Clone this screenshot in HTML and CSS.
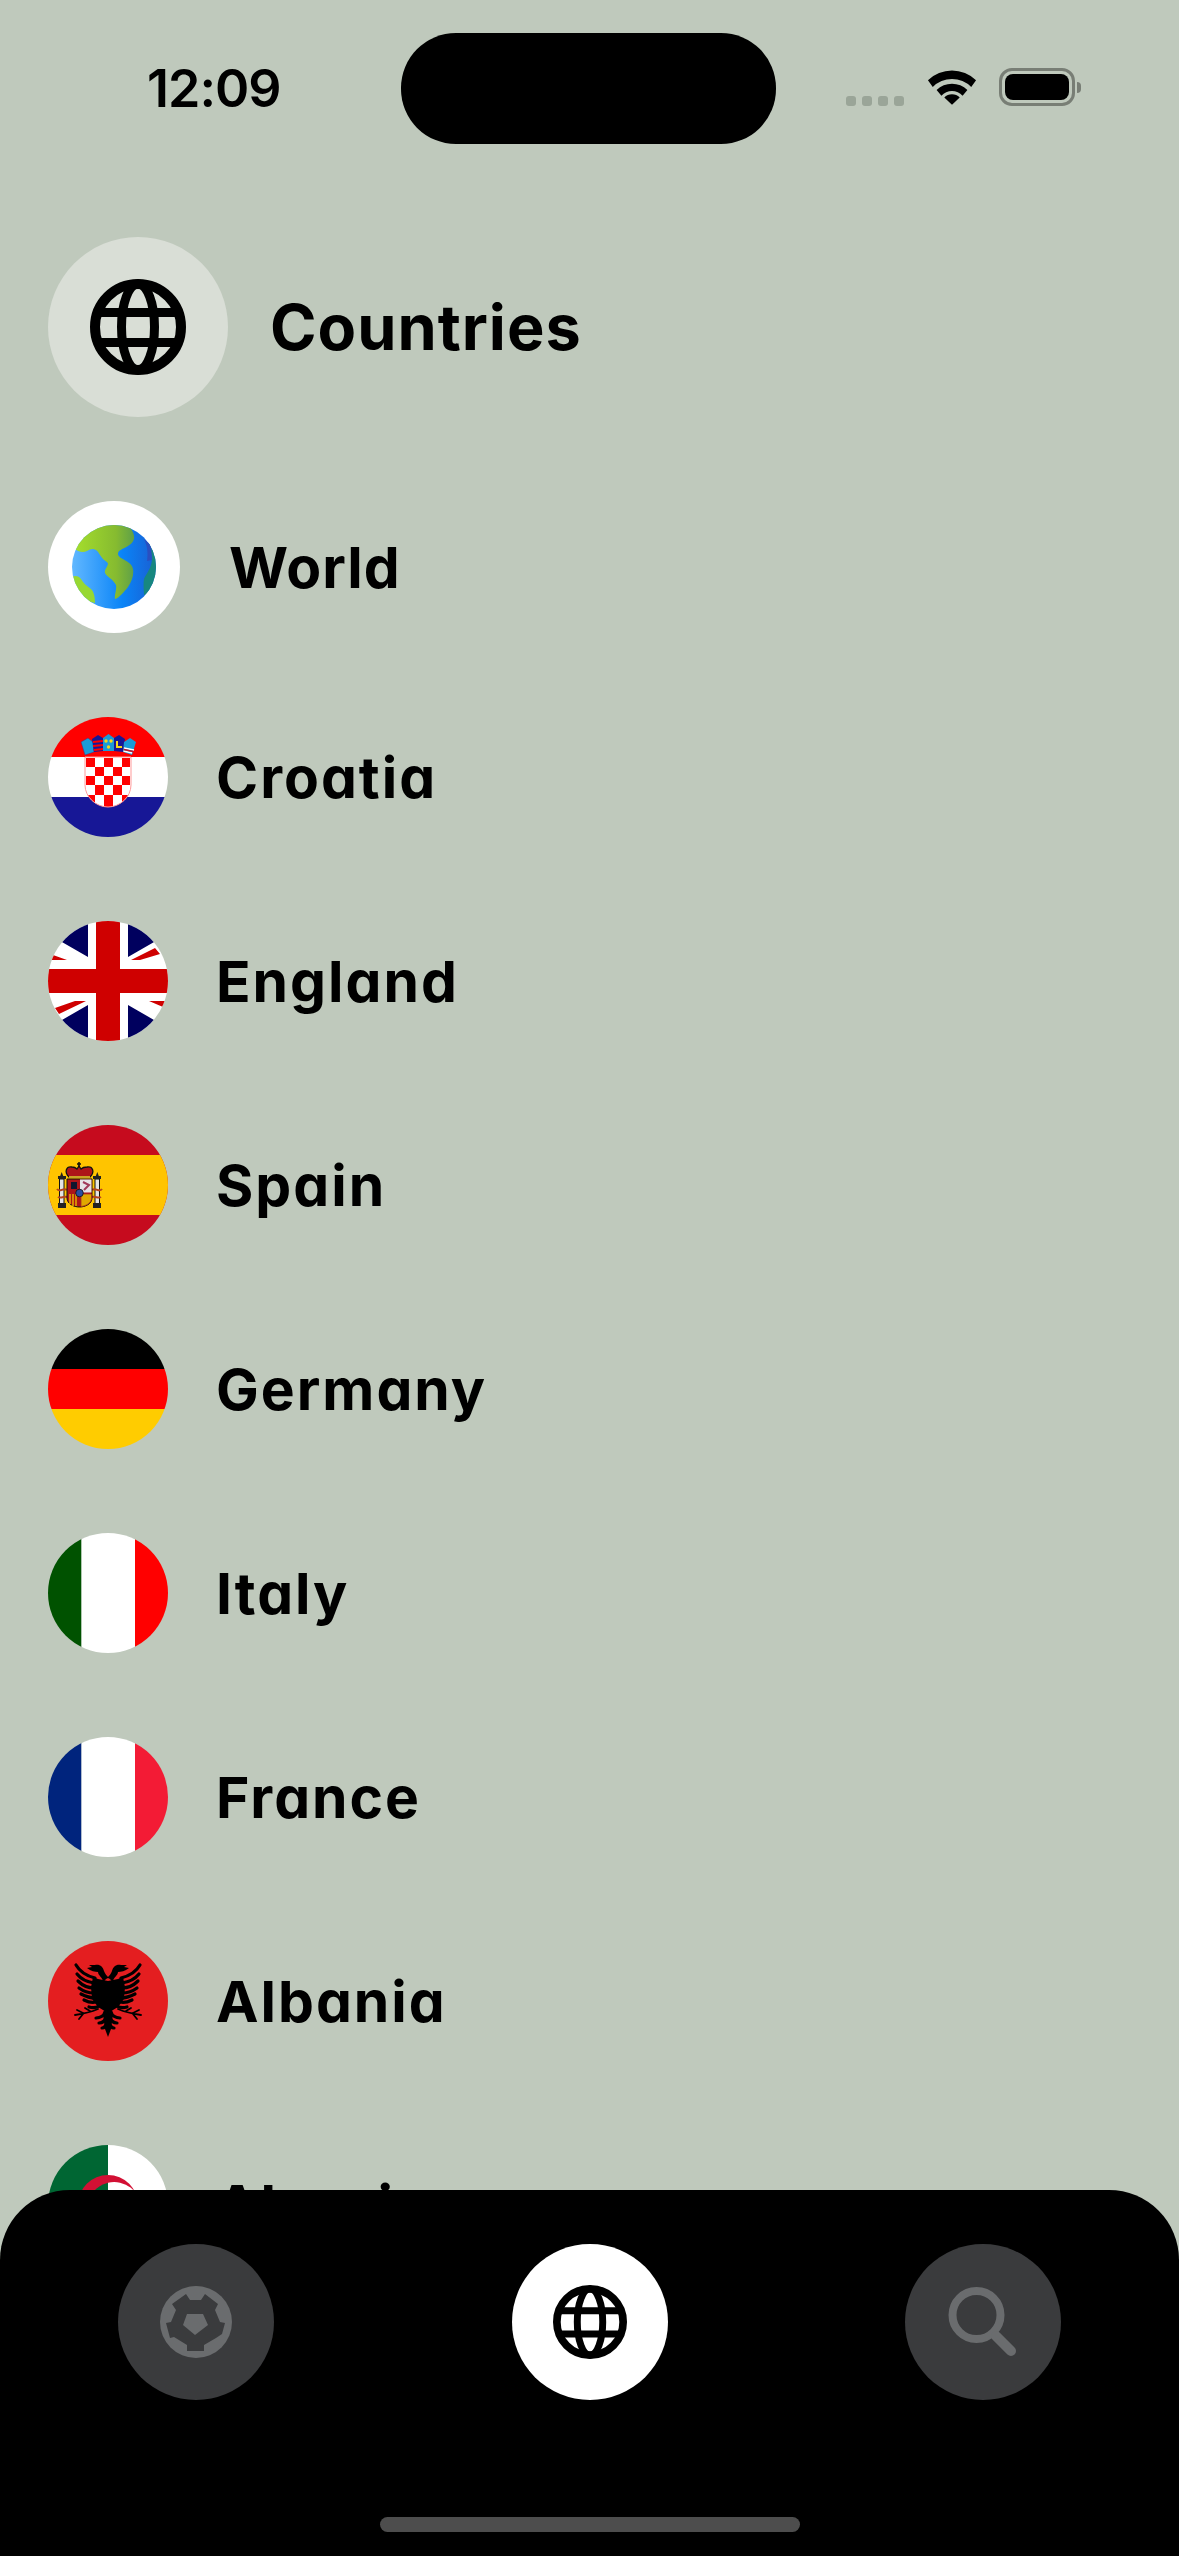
FILE: index.html
```html
<!DOCTYPE html>
<html lang="en">
<head>
    <meta charset="UTF-8">
    <meta name="viewport" content="width=device-width, initial-scale=1.0">
    <title>Countries</title>
    <link rel="stylesheet" href="styles.css">
</head>
<body>
    <svg class="defs" width="0" height="0">
        <defs>
            <symbol id="globe" viewBox="0 0 96 96">
                <g fill="none" stroke="currentColor" stroke-width="9">
                    <circle cx="48" cy="48" r="43" stroke-width="10"/>
                    <ellipse cx="48" cy="48" rx="16.500" ry="43"/>
                    <path d="M8 33.500H88M8 63.500H88"/>
                </g>
            </symbol>
            <clipPath id="shield"><path d="M37 40H83V68C83 80 72 90 60 90 48 90 37 80 37 68Z"/></clipPath>
            <g id="eagle-half">
                <path d="M60 37C57 38 56 41 55 41 55 36 50 35 50 31 47 31 43 30 39 27L44 26 41 24 47 24C52 23 55 26 56 30 57 33 59 35 60 36Z" fill="#000"/>
                <path d="M60 40L50 38 45 36 43 46 44 58 50 66 60 72Z" fill="#000"/>
                <g fill="none" stroke="#000" stroke-width="3.200" stroke-linecap="round">
                    <path d="M47 37C39 35 32 31 28 24"/>
                    <path d="M46 42C39 41 33 38 29 33"/>
                    <path d="M46 47C39 47 34 44 30 40"/>
                    <path d="M46 52C40 52 35 50 31 47"/>
                    <path d="M47 57C41 57 37 55 33 53"/>
                    <path d="M48 61C44 62 40 61 36 59"/>
                    <path d="M51 65C48 67 45 67 41 66"/>
                    <path d="M57 71C56 75 52 77 48 77"/>
                    <path d="M58 76C57 80 55 82 51 82"/>
                    <path d="M59 81C58 85 57 87 54 87"/>
                </g>
                <path d="M60 70L55 73 57 88 60 96Z" fill="#000"/>
                <path d="M50 68C43 71 34 73 27 74M35 72L29 69M35 73L31 78M42 70L37 67" fill="none" stroke="#000" stroke-width="1.800" stroke-linecap="round"/>
            </g>
        </defs>
    </svg>

    <div class="screen">
        <div class="status-bar">
            <span class="time">12:09</span>
            <div class="island"></div>
            <div class="status-icons">
                <div class="signal"><i></i><i></i><i></i><i></i></div>
                <svg class="wifi" width="50" height="38" viewBox="0 0 52 38">
                    <path d="M1 12 A36 36 0 0 1 51 12 L46 19 A28 28 0 0 0 6 19Z"/>
                    <path d="M10 23 A23 23 0 0 1 42 23 L37 29 A15 15 0 0 0 15 29Z" transform="translate(0 -1)"/>
                    <path d="M18 30 A11 11 0 0 1 34 30 L26 37.500Z"/>
                </svg>
                <div class="battery"><div class="battery-level"></div></div>
                <div class="battery-cap"></div>
            </div>
        </div>

        <div class="header">
            <div class="header-icon"><svg width="96" height="96"><use href="#globe"/></svg></div>
            <h1>Countries</h1>
        </div>

        <div class="world-row">
            <div class="world-icon">
                <svg width="84" height="84" viewBox="0 0 84 84">
                    <defs>
                        <linearGradient id="sea" x1="0" x2="1" y1="0" y2="0">
                            <stop offset="0" stop-color="#62b8ff"/>
                            <stop offset=".6" stop-color="#0a84f7"/>
                            <stop offset="1" stop-color="#1a5fd2"/>
                        </linearGradient>
                        <linearGradient id="land" x1="0" x2="1" y1="0" y2="0">
                            <stop offset="0" stop-color="#a5de2c"/>
                            <stop offset=".7" stop-color="#86bb30"/>
                            <stop offset="1" stop-color="#5fa048"/>
                        </linearGradient>
                        <clipPath id="earth"><circle cx="42" cy="42" r="42"/></clipPath>
                    </defs>
                    <g clip-path="url(#earth)">
                        <rect width="84" height="84" fill="url(#sea)"/>
                        <path d="M2 23C6 27 11 28 15 26 18 24 21 23 24 25 27 27 28 31 31 34 33 36 36 37 36 39 35 43 32 45 33 48 35 52 41 54 44 60 45 65 42 70 43 74 47 73 52 67 56 62 60 56 62 50 61 44 60 38 54 36 49 33 46 31 45 29 47 26 51 23 60 21 62 14 63 8 58 2 54-2L10-2Z" fill="url(#land)"/>
                        <path d="M0 52C3 50 7 51 9 54 11 58 15 61 19 64 22 67 23 72 23 78L0 72Z" fill="#97d832"/>
                        <path d="M76 14C77 22 80 28 80 35 79 44 74 49 72 54 71 60 72 66 72 70L86 66V14Z" fill="#17877f"/>
                        <path d="M72 14C76 22 76 30 75 36L80 35 79 20Z" fill="#2a4fc0"/>
                    </g>
                </svg>
            </div>
            <span class="country-name">World</span>
        </div>

        <ul class="country-list">
            <li class="country">
                <svg class="flag" viewBox="0 0 120 120">
                    <rect width="120" height="40" fill="#ff0000"/>
                    <rect y="40" width="120" height="40" fill="#fff"/>
                    <rect y="80" width="120" height="40" fill="#171796"/>
                    <!-- crown -->
                    <path d="M33 25L40 21 45 25 46 35 37 38Z" fill="#1a9bd8" stroke="#5a2a6a" stroke-width=".5"/>
                    <path d="M44 22L50 18 55 21V34L46 35Z" fill="#171796"/>
                    <path d="M45 25L55 24M45 29L55 28M46 33L55 32" stroke="#f00" stroke-width="2"/>
                    <path d="M55 21L60.500 17 66 21V34H55Z" fill="#1a9bd8"/>
                    <circle cx="58" cy="24" r="1.700" fill="#f7db17"/><circle cx="63" cy="24" r="1.700" fill="#f7db17"/><circle cx="60.500" cy="30" r="1.700" fill="#f7db17"/>
                    <path d="M66 21L71 18 77 22 75 35 66 34Z" fill="#171796"/>
                    <path d="M69 24V30H74" fill="none" stroke="#f7db17" stroke-width="2"/>
                    <path d="M76 25L82 21 88 25 84 38 75 35Z" fill="#1a9bd8"/>
                    <path d="M76 31L86 33M75.500 34L84 36" stroke="#fff" stroke-width="1.600"/>
                    <path d="M76 32.500L85 34.500" stroke="#d01020" stroke-width="1.400"/>
                    <!-- shield -->
                    <g clip-path="url(#shield)">
                        <rect x="37" y="40" width="46" height="50" fill="#fff"/>
                        <path d="M38 41h9v9h-9zM56 41h9v9h-9zM74 41h8v9h-8zM47 50h9v9h-9zM65 50h9v9h-9zM38 59h9v9h-9zM56 59h9v9h-9zM74 59h8v9h-8zM47 68h9v10h-9zM65 68h9v10h-9zM38 78h9v12h-9zM56 78h9v12h-9zM74 78h8v12h-8z" fill="#ff0000"/>
                    </g>
                    <path d="M37 40H83V68C83 80 72 90 60 90 48 90 37 80 37 68Z" fill="none" stroke="#ff9a9a" stroke-width="1"/>
                </svg>
                <span class="country-name">Croatia</span>
            </li>
            <li class="country">
                <svg class="flag" viewBox="0 0 120 120">
                    <rect width="120" height="120" fill="#fff"/>
                    <path d="M40 0V36L0 13V0ZM80 0V36L120 13V0ZM40 120V84L0 107V120ZM80 120V84L120 107V120Z" fill="#00005e"/>
                    <path d="M0 39V33L5 34 19 39ZM83 39L107 27 112 33 92 39ZM7 87L27 80H38L11 93ZM101 80H120V86H115Z" fill="#cf0000"/>
                    <rect x="48" width="24" height="120" fill="#cf0000"/>
                    <rect y="48" width="120" height="24" fill="#cf0000"/>
                </svg>
                <span class="country-name">England</span>
            </li>
            <li class="country">
                <svg class="flag" viewBox="0 0 120 120">
                    <rect width="120" height="120" fill="#c60b1e"/>
                    <rect y="30" width="120" height="60" fill="#ffc400"/>
                    <!-- pillars -->
                    <rect x="11.500" y="54" width="4.500" height="25" fill="#e4e4e4" stroke="#111" stroke-width="1"/>
                    <rect x="47" y="54" width="4.500" height="25" fill="#e4e4e4" stroke="#111" stroke-width="1"/>
                    <path d="M10 78h8v5h-8zM45 78h8v5h-8zM10 51h8v3h-8zM45 51h8v3h-8z" fill="#222"/>
                    <path d="M13.700 47l1.500 4h-3zM49.300 47l1.500 4h-3z" fill="#222"/>
                    <path d="M9 64C12 68 15 62 19 65M44 65C48 62 51 68 54 64M10 72C13 74 15 71 19 72M44 72C48 71 50 74 53 72" stroke="#b5421e" stroke-width="2" fill="none"/>
                    <!-- crown -->
                    <path d="M21 52C16 47 18 41 24 42 26 42 28 43 29 44L31 41 33 44C35 42 37 42 39 42 45 41 47 47 42 52Z" fill="#ad1519" stroke="#111" stroke-width="1.300"/>
                    <path d="M31 37V42M29 39H33" stroke="#111" stroke-width="1.500"/>
                    <path d="M21 52H42" stroke="#c9a227" stroke-width="2"/>
                    <!-- shield -->
                    <path d="M19 54H44V73C44 79 37 82 31.500 82 26 82 19 79 19 73Z" fill="#ad1519" stroke="#111" stroke-width="1"/>
                    <rect x="32" y="54.500" width="11.500" height="13" fill="#e6e2e6"/>
                    <path d="M35 57L41 60 36 65" stroke="#a13a5a" stroke-width="2" fill="none"/>
                    <path d="M23 57h6v7h-6z" fill="#10162e"/>
                    <path d="M22 69V79M25 69V81M28 69V81" stroke="#e0a800" stroke-width="1.600"/>
                    <path d="M33 69H43.500V73C43.500 78 38 81 33 81.500Z" fill="#e0a800" stroke="#a8321c" stroke-width=".8"/>
                    <circle cx="31.500" cy="68" r="3.800" fill="#2a4ea0" stroke="#111" stroke-width=".8"/>
                </svg>
                <span class="country-name">Spain</span>
            </li>
            <li class="country">
                <svg class="flag" viewBox="0 0 120 120">
                    <rect width="120" height="40" fill="#000"/>
                    <rect y="40" width="120" height="40" fill="#ff0000"/>
                    <rect y="80" width="120" height="40" fill="#ffcc00"/>
                </svg>
                <span class="country-name">Germany</span>
            </li>
            <li class="country">
                <svg class="flag" viewBox="0 0 120 120">
                    <rect width="33.500" height="120" fill="#005200"/>
                    <rect x="33.500" width="53.500" height="120" fill="#fff"/>
                    <rect x="87" width="33" height="120" fill="#ff0000"/>
                </svg>
                <span class="country-name">Italy</span>
            </li>
            <li class="country">
                <svg class="flag" viewBox="0 0 120 120">
                    <rect width="33.500" height="120" fill="#00247d"/>
                    <rect x="33.500" width="53.500" height="120" fill="#fff"/>
                    <rect x="87" width="33" height="120" fill="#f31b35"/>
                </svg>
                <span class="country-name">France</span>
            </li>
            <li class="country">
                <svg class="flag" viewBox="0 0 120 120">
                    <rect width="120" height="120" fill="#e41e20"/>
                    <use href="#eagle-half"/>
                    <use href="#eagle-half" transform="matrix(-1 0 0 1 120 0)"/>
                </svg>
                <span class="country-name">Albania</span>
            </li>
            <li class="country">
                <svg class="flag" viewBox="0 0 120 120">
                    <rect width="60" height="120" fill="#006633"/>
                    <rect x="60" width="60" height="120" fill="#fff"/>
                    <circle cx="60" cy="60" r="30" fill="#d21034"/>
                    <path d="M60 37.700A27 27 0 0 0 60 90.300Z" fill="#006633"/>
                    <path d="M60 37.700A27 27 0 1 1 60 90.300Z" fill="#fff"/>
                </svg>
                <span class="country-name">Algeria</span>
            </li>
        </ul>
    </div>

    <nav class="tab-bar">
        <div class="tabs">
            <a class="tab">
                <svg width="72" height="72" viewBox="0 0 72 72">
                    <circle cx="36" cy="36" r="36" fill="#6a6c6e"/>
                    <path d="M26 8L30 14H41L45 8 58 18 55 24 60 36 65 37 62 48 56 52 44 59V65H27V59L14 51 10 52 6 37 11 36 16 24 12 18Z" fill="#3a3b3d"/>
                    <path d="M27 28H43L48 39 35 49 23 39Z" fill="#6a6c6e"/>
                </svg>
            </a>
            <a class="tab tab-active"><svg width="74" height="74"><use href="#globe"/></svg></a>
            <a class="tab">
                <svg width="72" height="72" viewBox="0 0 72 72" fill="none" stroke="#6a6c6e">
                    <circle cx="29.500" cy="29" r="24" stroke-width="8"/>
                    <path d="M49 50L64 65" stroke-width="10" stroke-linecap="round"/>
                </svg>
            </a>
        </div>
        <div class="home-indicator"></div>
    </nav>
</body>
</html>
```

FILE: styles.css
```css
* {
    box-sizing: border-box;
}
html, body {
    margin: 0;
    padding: 0;
}
body {
    width: 1179px;
    height: 2556px;
    position: relative;
    overflow: hidden;
    background-color: #bfc9bc;
    color: #000;
    font-family: 'Inter', 'Liberation Sans', sans-serif;
    font-feature-settings: 'cv11', 'liga' 0;
}
.defs {
    position: absolute;
}
.screen {
    height: 2556px;
    overflow: hidden;
}

/* status bar */
.status-bar {
    height: 237px;
    padding-top: 33px;
    display: flex;
    align-items: flex-start;
}
.time {
    width: 401px;
    padding: 31px 0 0 147px;
    font-size: 52px;
    line-height: 50px;
    font-weight: 600;
    letter-spacing: -1px;
}
.island {
    width: 375px;
    height: 111px;
    border-radius: 55px;
    background: #000;
}
.status-icons {
    display: flex;
    align-items: flex-end;
    margin-left: 70px;
    padding-top: 35px;
}
.signal {
    display: flex;
    gap: 6px;
    margin-right: 23px;
}
.signal i {
    width: 10px;
    height: 10px;
    border-radius: 3px;
    background: #9aa598;
}
.wifi {
    display: block;
    fill: #000;
    margin-right: 22px;
}
.battery {
    width: 76px;
    height: 38px;
    padding: 3px;
    border: 3px solid #787e75;
    border-radius: 13px;
}
.battery-level {
    height: 100%;
    border-radius: 8px;
    background: #000;
}
.battery-cap {
    width: 4px;
    height: 11px;
    margin: 0 0 13px 2px;
    border-radius: 0 4px 4px 0;
    background: #787e75;
}

/* header */
.header {
    display: flex;
    align-items: center;
    gap: 42px;
    padding-left: 48px;
}
.header-icon {
    width: 180px;
    height: 180px;
    border-radius: 50%;
    background: #d9ded6;
    display: flex;
    align-items: center;
    justify-content: center;
}
h1 {
    margin: 0;
    font-size: 63px;
    font-weight: 700;
    letter-spacing: 1px;
}

/* rows */
.world-row {
    display: flex;
    align-items: center;
    gap: 49px;
    margin-top: 84px;
    padding-left: 48px;
}
.world-icon {
    width: 132px;
    height: 132px;
    border-radius: 50%;
    background: #fff;
    display: flex;
    align-items: center;
    justify-content: center;
}
.country-list {
    list-style: none;
    margin: 84px 0 0;
    padding: 0 0 0 48px;
    display: flex;
    flex-direction: column;
    gap: 84px;
}
.country {
    display: flex;
    align-items: center;
    gap: 48px;
}
.flag {
    width: 120px;
    height: 120px;
    border-radius: 50%;
    flex-shrink: 0;
}
.country-name {
    font-size: 57px;
    font-weight: 700;
    letter-spacing: 2px;
}
.world-row .country-name {
    letter-spacing: 1px;
}

/* bottom bar */
.tab-bar {
    position: absolute;
    left: 0;
    right: 0;
    bottom: 0;
    height: 366px;
    padding-top: 54px;
    background: #000;
    border-radius: 70px 70px 0 0;
    display: flex;
    flex-direction: column;
    align-items: center;
}
.tabs {
    display: flex;
    gap: 237.5px;
}
.tab {
    width: 156px;
    height: 156px;
    border-radius: 50%;
    background: #3a3b3d;
    display: flex;
    align-items: center;
    justify-content: center;
}
.tab-active {
    background: #fff;
    color: #000;
}
.home-indicator {
    width: 420px;
    height: 15px;
    margin-top: 117px;
    border-radius: 8px;
    background: #4d4d4d;
}
```
